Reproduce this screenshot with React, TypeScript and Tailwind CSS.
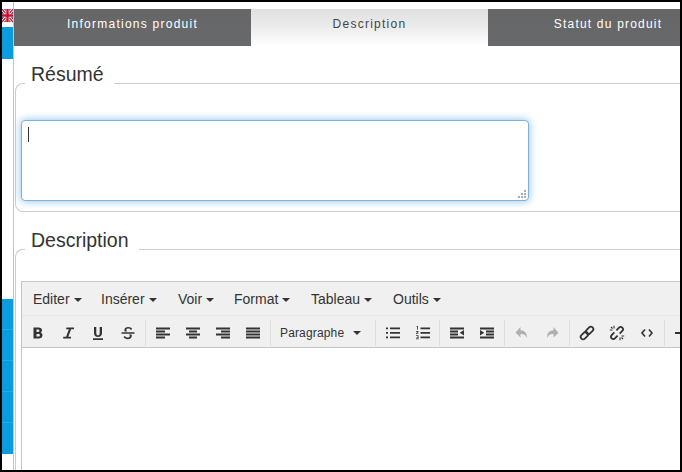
import React from "react";

function Caret() {
  return <span className="ml-[4px] inline-block w-0 h-0 border-x-[4px] border-x-transparent border-t-[4px] border-t-[#333] translate-y-[-2px]" />;
}

function Sep({ narrow }: { narrow?: boolean }) {
  return (
    <div className={narrow ? "w-[4px] h-[26px] shrink-0 pl-[1px]" : "w-[5px] h-[26px] shrink-0 pl-[2px]"}>
      <div className="w-px h-full bg-[#dddddd]" />
    </div>
  );
}

function Btn({ children }: { children: React.ReactNode }) {
  return <div className="w-[30px] h-[28px] flex items-center justify-center shrink-0">{children}</div>;
}

function Ico({ d, color = "#333" }: { d: string; color?: string }) {
  return (
    <svg width="16" height="16" viewBox="0 0 16 16" fill={color}>
      <path d={d} />
    </svg>
  );
}

const I = {
  bold: "M3.500 2.500h5.100c2 0 3.400 1 3.400 2.800 0 1.100-.7 1.900-1.600 2.300 1.200.3 2.100 1.200 2.100 2.600 0 2-1.600 3.300-3.800 3.300H3.500V2.500zm3 2v2.400h1.600c.9 0 1.300-.5 1.300-1.200s-.5-1.200-1.300-1.200H6.500zm0 4.400v2.600h1.900c1 0 1.500-.5 1.500-1.300s-.6-1.300-1.600-1.300H6.500z",
  italic: "M6.500 2.500h7.500v1.700h-2.900L8.300 11.800h2.700v1.700H3.200v-1.700h2.900l2.800-7.600H6z",
  underline: "M4 2h2.300v6c0 1.500.6 2.300 1.700 2.300s1.700-.8 1.700-2.300V2H12v6.100c0 2.600-1.600 3.900-4 3.900S4 10.700 4 8.100V2zM3 13.200h10V15H3z",
  strike: "M1.500 7.300h13v1.500h-13zM4.700 6.500C4.500 6.100 4.400 5.700 4.400 5.200 4.400 3.100 6.100 2 8.300 2c1.800 0 3.100.7 3.900 1.900l-1.500 1C10.200 4.100 9.400 3.600 8.300 3.600c-1.100 0-1.900.5-1.900 1.400 0 .6.200 1.100.7 1.500H4.700zM11.500 9.500c.2.400.3.800.3 1.300 0 2.100-1.700 3.400-4 3.400-1.900 0-3.400-.8-4.300-2.200l1.500-1c.6 1 1.600 1.500 2.800 1.500s2-.6 2-1.500c0-.6-.3-1.100-.8-1.500h2.500z",
  left: "M1 2.500h14v2H1zM1 5.500h9v2H1zM1 8.500h14v2H1zM1 11.500h9v2H1z",
  center: "M1 2.500h14v2H1zM4 5.500h8v2H4zM1 8.500h14v2H1zM4 11.500h8v2H4z",
  right: "M1 2.500h14v2H1zM6 5.500h9v2H6zM1 8.500h14v2H1zM6 11.500h9v2H6z",
  justify: "M1 2.500h14v2H1zM1 5.500h14v2H1zM1 8.500h14v2H1zM1 11.500h14v2H1z",
  bullist: "M5 2.500h10v1.800H5zM5 7h10v1.800H5zM5 11.500h10v1.800H5zM1 2.500h2v1.800H1zM1 7h2v1.800H1zM1 11.500h2v1.800H1z",
  numlist: "M5.500 2.500h9.500v1.800H5.500zM5.500 7h9.500v1.800H5.500zM5.500 11.500h9.500v1.800H5.500zM1.500 1h1.500v3.800H2.200V1.800H1.500zM1 6h2.500v.7L2 8.400h1.500v.7H1v-.7l1.500-1.700H1zM1 10.300h2.500v4H1v-.7h1.700v-.9H1.500v-.6h1.200v-1.100H1z",
  outdent: "M1 2.500h14v2H1zM1 5.500h8v2H1zM1 8.500h8v2H1zM1 11.500h14v2H1zM15 5v5.500L10.800 7.750z",
  indent: "M1 2.500h14v2H1zM7 5.500h8v2H7zM7 8.500h8v2H7zM1 11.500h14v2H1zM1 5v5.500L5.200 7.750z",
  undo: "M6.500 2v3.300c4.200.2 6.500 2.500 6.500 7.700-1.300-2.700-2.700-3.800-6.500-3.900v3.400L1.500 7.400z",
  redo: "M9.500 2v3.300c-4.200.2-6.500 2.500-6.500 7.700 1.300-2.700 2.700-3.800 6.500-3.900v3.400l5-4.600z",
};

function LinkIcon() {
  return (
    <svg width="16" height="16" viewBox="0 0 16 16" fill="none" stroke="#333" strokeWidth="1.800">
      <rect x="6.400" y="3" width="8.400" height="4.800" rx="2.400" transform="rotate(-45 10.600 5.400)" />
      <rect x="1.200" y="8.200" width="8.400" height="4.800" rx="2.400" transform="rotate(-45 5.400 10.600)" />
    </svg>
  );
}

function UnlinkIcon() {
  return (
    <svg width="16" height="16" viewBox="0 0 16 16" fill="none" stroke="#333" strokeWidth="1.800">
      <g transform="rotate(-45 8 8)">
        <path d="M6.500 5.700H2.800a2.300 2.300 0 0 0 0 4.600H6.500" />
        <path d="M9.500 5.700H13.200a2.300 2.300 0 0 1 0 4.600H9.500" />
      </g>
      <path d="M5 .8v2.700M.8 5h2.700M2 2l1.500 1.500M11 12.500v2.700M12.500 11h2.700M12.500 12.500L14 14" strokeWidth="1.100" />
    </svg>
  );
}

function Tab({ label, active }: { label: string; active?: boolean }) {
  return (
    <div
      className={
        active
          ? "w-[237px] shrink-0 h-full flex items-center justify-center text-[12px] tracking-[1.25px] text-[#444] bg-gradient-to-b from-[#e0e0e0] via-[#ececec] to-white"
          : "w-[237px] shrink-0 h-full flex items-center justify-center text-[12px] tracking-[1.25px] text-white bg-gradient-to-b from-[#666666] to-[#68696c]"
      }
    >
      <span className="translate-y-[-4px]">{label}</span>
    </div>
  );
}

export default function App() {
  return (
    <div className="w-[682px] h-[472px] overflow-hidden border-2 border-black bg-white flex font-['Liberation_Sans',Arial,sans-serif] text-[#333]">
      <aside className="w-[11px] shrink-0 pt-[7px] flex flex-col">
        <svg width="11" height="18" viewBox="0 0 11 18" className="shrink-0">
          <rect width="11" height="18" fill="#fff" />
          <rect y="0" width="11" height="13" fill="#2b3f7e" />
          <path d="M0 0L11 13M11 0L0 13" stroke="#fff" strokeWidth="3" />
          <path d="M0 0L11 13M11 0L0 13" stroke="#c8102e" strokeWidth="1.200" />
          <path d="M5.500 0V13M0 6.500H11" stroke="#fff" strokeWidth="3.500" />
          <path d="M5.500 0V13M0 6.500H11" stroke="#c8102e" strokeWidth="2.400" />
        </svg>
        <div className="h-[32px] bg-[#0a9cdc] shrink-0" />
        <div className="h-[240px] shrink-0" />
        <div className="h-[31px] bg-[#0a9cdc] shrink-0 border-b border-[#2aa9e0]" />
        <div className="h-[31px] bg-[#0a9cdc] shrink-0 border-b border-[#2aa9e0]" />
        <div className="h-[31px] bg-[#0a9cdc] shrink-0 border-b border-[#2aa9e0]" />
        <div className="h-[31px] bg-[#0a9cdc] shrink-0 border-b border-[#2aa9e0]" />
        <div className="h-[31px] bg-[#0a9cdc] shrink-0" />
      </aside>
      <main className="relative w-[667px] shrink-0 border-l border-[#c4c4c4] pt-[7px]">
        <div className="flex h-[37px] w-[711px]">
          <Tab label="Informations produit" />
          <Tab label="Description" active />
          <div className="w-[237px] shrink-0 h-full flex items-center justify-center pl-[3px] text-[12px] tracking-[1.2px] text-white bg-gradient-to-b from-[#666666] to-[#68696c]">
            <span className="translate-y-[-4px]">Statut du produit</span>
          </div>
        </div>

        {/* Résumé fieldset */}
        <div className="relative ml-[1px] mt-[37px] h-[129px] border border-[#cccccc] border-r-0 rounded-tl-[8px] rounded-bl-[8px] w-[700px]">
          <div className="absolute left-[9px] -top-[24px] h-[30px] bg-white pl-[6px] pr-[10px] text-[19.5px] leading-[28px] text-[#333]">Résumé</div>
          <div className="absolute left-[5px] top-[36px] w-[508px] h-[81px] rounded-[4px] border border-[#7fb0d6] bg-white shadow-[0_0_8px_rgba(102,175,233,0.8)]">
            <div className="absolute left-[6px] top-[6px] w-px h-[15px] bg-[#333]" />
            <svg width="8" height="8" viewBox="0 0 8 8" className="absolute right-[2px] bottom-[2px]" fill="#aaa">
              <rect x="6" y="0" width="2" height="2" />
              <rect x="6" y="3" width="2" height="2" />
              <rect x="3" y="3" width="2" height="2" />
              <rect x="6" y="6" width="2" height="2" />
              <rect x="3" y="6" width="2" height="2" />
              <rect x="0" y="6" width="2" height="2" />
            </svg>
          </div>
        </div>

        {/* Description fieldset */}
        <div className="relative ml-[1px] mt-[37px] h-[300px] border border-[#cccccc] border-r-0 border-b-0 rounded-tl-[8px] w-[700px]">
          <div className="absolute left-[9px] -top-[24px] h-[30px] bg-white pl-[6px] pr-[10px] text-[19.5px] leading-[28px] text-[#333]">Description</div>
          <div className="absolute left-[5px] top-[31px] w-[700px] h-[300px] border border-[#c5c5c5] bg-white">
            <div className="h-[33px] bg-[#f0f0f0] flex items-center pl-[11px] pt-[2px] text-[14px] text-[#333]">
              <span className="w-[68px] shrink-0">Editer<Caret /></span>
              <span className="w-[77px] shrink-0">Insérer<Caret /></span>
              <span className="w-[56px] shrink-0">Voir<Caret /></span>
              <span className="w-[77px] shrink-0">Format<Caret /></span>
              <span className="w-[82px] shrink-0">Tableau<Caret /></span>
              <span className="shrink-0">Outils<Caret /></span>
            </div>
            <div className="h-[33px] bg-[#f0f0f0] border-t border-[#e6e6e6] border-b border-b-[#c5c5c5] flex items-center pl-[1px] pt-[2px]">
              <Btn><Ico d={I.bold} /></Btn>
              <Btn><Ico d={I.italic} /></Btn>
              <Btn><Ico d={I.underline} /></Btn>
              <Btn><Ico d={I.strike} /></Btn>
              <Sep />
              <Btn><Ico d={I.left} /></Btn>
              <Btn><Ico d={I.center} /></Btn>
              <Btn><Ico d={I.right} /></Btn>
              <Btn><Ico d={I.justify} /></Btn>
              <Sep />
              <div className="w-[100px] h-[28px] shrink-0 flex items-center pl-[7px] text-[12px] tracking-[0.15px] text-[#333]">
                <span>Paragraphe</span>
                <span className="ml-[9px] inline-block w-0 h-0 border-x-[4px] border-x-transparent border-t-[4px] border-t-[#333]" />
              </div>
              <Sep />
              <Btn><Ico d={I.bullist} /></Btn>
              <Btn><Ico d={I.numlist} /></Btn>
              <Sep narrow />
              <Btn><Ico d={I.outdent} /></Btn>
              <Btn><Ico d={I.indent} /></Btn>
              <Sep />
              <Btn><Ico d={I.undo} color="#b0b0b0" /></Btn>
              <Btn><Ico d={I.redo} color="#b0b0b0" /></Btn>
              <Sep />
              <Btn><LinkIcon /></Btn>
              <Btn><UnlinkIcon /></Btn>
              <Btn>
                <svg width="16" height="16" viewBox="0 0 16 16" fill="none" stroke="#333" strokeWidth="1.600"><path d="M6 4.500L3 8l3 3.500M10 4.500L13 8l-3 3.500" /></svg>
              </Btn>
              <Sep />
              <Btn><div className="w-[14px] h-[2px] bg-[#333]" /></Btn>
            </div>
          </div>
        </div>
      </main>
    </div>
  );
}
